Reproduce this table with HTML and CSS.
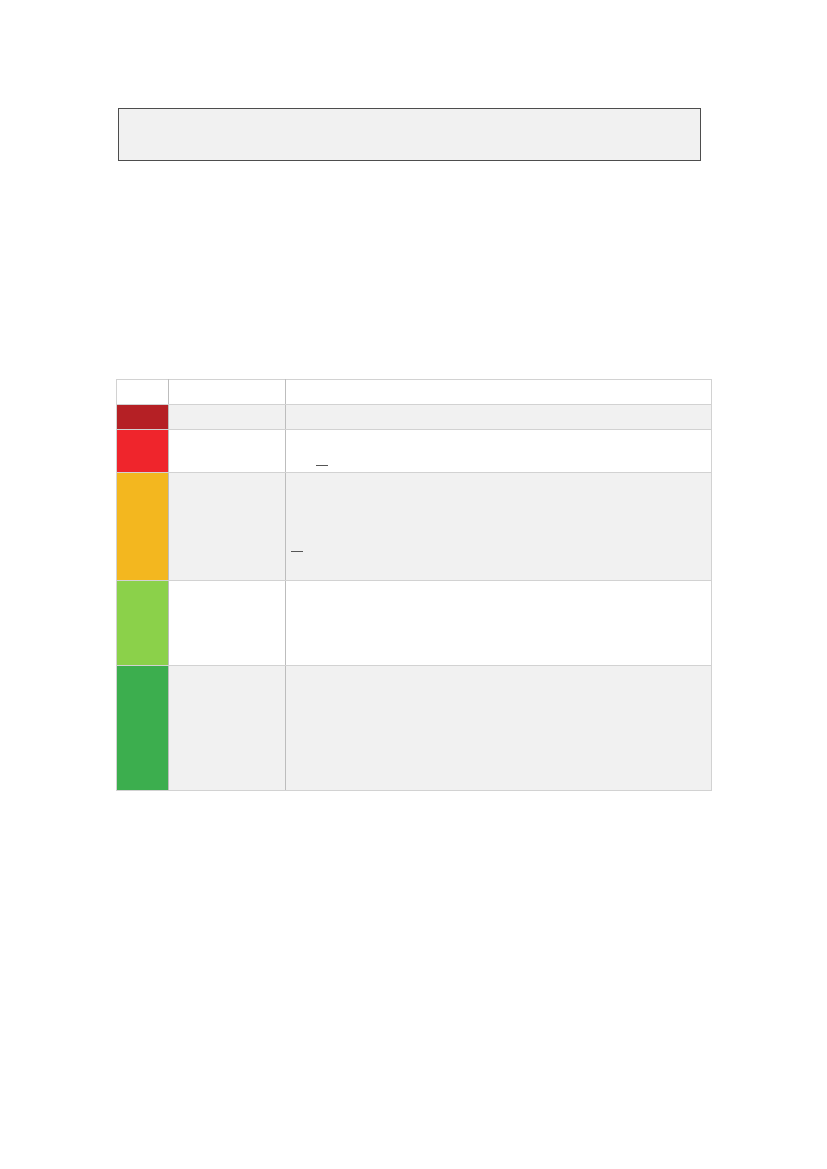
FILE: index.html
```html
<!DOCTYPE html>
<html>
<head>
<meta charset="utf-8">
<link rel="stylesheet" href="styles.css">
</head>
<body>
<div class="page">
  <div class="banner"></div>
  <table class="legend">
    <colgroup>
      <col class="c-swatch">
      <col class="c-label">
      <col class="c-desc">
    </colgroup>
    <tr class="r-head"><td></td><td></td><td></td></tr>
    <tr class="r1 alt"><td class="sw dark-red"></td><td></td><td></td></tr>
    <tr class="r2"><td class="sw red"></td><td></td><td><div class="mark m2"></div></td></tr>
    <tr class="r3 alt"><td class="sw amber"></td><td></td><td><div class="mark m3"></div></td></tr>
    <tr class="r4"><td class="sw lime"></td><td></td><td></td></tr>
    <tr class="r5 alt"><td class="sw green"></td><td></td><td></td></tr>
  </table>
</div>
</body>
</html>
```

FILE: styles.css
```css
html, body {
  margin: 0;
  padding: 0;
  background: #ffffff;
  font-family: "Liberation Sans", Arial, sans-serif;
}
.page {
  padding: 108px 0 0 116px;
}
.banner {
  margin-left: 2px;
  width: 581px;
  height: 51px;
  background: #f1f1f1;
  border: 1px solid #4d4d4d;
}
.legend {
  margin-top: 218px;
  border-collapse: collapse;
  width: 595px;
  table-layout: fixed;
}
.c-swatch { width: 52px; }
.c-label { width: 117px; }
.c-desc { width: 426px; }
.legend td {
  padding: 0;
  vertical-align: top;
  border: 1px solid #d2d2d2;
  border-left-color: #bdbdbd;
  border-right-color: #bdbdbd;
}
.legend tr > td:first-child { border-left-color: #d2d2d2; }
.legend tr > td:last-child { border-right-color: #d2d2d2; }
.legend tr { background: #ffffff; }
.legend tr.alt { background: #f1f1f1; }
.r-head { height: 25px; }
.r1 { height: 25px; }
.r2 { height: 43px; }
.r3 { height: 108px; }
.r4 { height: 85px; }
.r5 { height: 125px; }
.sw.dark-red { background: #b52025; }
.sw.red { background: #ef252c; }
.sw.amber { background: #f3b71f; }
.sw.lime { background: #8bd14a; }
.sw.green { background: #3cae4e; }
.mark {
  width: 12px;
  height: 1px;
  background: #555555;
}
.m2 { margin: 35px 0 0 30px; }
.m3 { margin: 78px 0 0 5px; }
```
